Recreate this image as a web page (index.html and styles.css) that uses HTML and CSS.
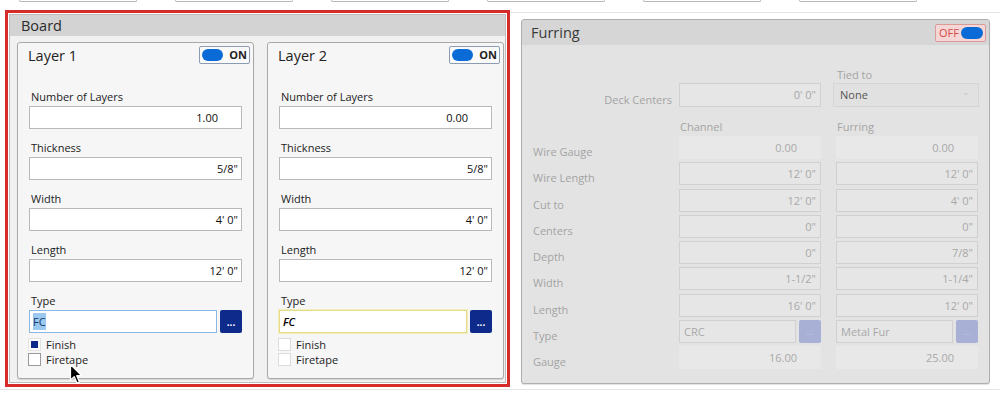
FILE: index.html
```html
<!DOCTYPE html>
<html>
<head>
<meta charset="utf-8">
<title>Board / Furring</title>
<link rel="stylesheet" href="styles.css">
</head>
<body>
    <div class="strip">
        <span></span><span></span><span></span><span></span><span></span><span></span>
    </div>
    <div class="main">
        <div class="board-frame">
            <div class="board">
                <div class="board-head">Board</div>
                <div class="layers">
                    <!-- layer 1 -->
                    <div class="layer">
                        <div class="layer-head">
                            <span class="layer-title">Layer 1</span>
                            <span class="toggle on"><i></i>ON</span>
                        </div>
                        <div class="layer-body">
                            <div class="field"><label>Number of Layers</label><div class="input num">1.00</div></div>
                            <div class="field"><label>Thickness</label><div class="input">5/8"</div></div>
                            <div class="field"><label>Width</label><div class="input">4' 0"</div></div>
                            <div class="field"><label>Length</label><div class="input">12' 0"</div></div>
                            <div class="field type">
                                <label>Type</label>
                                <div class="type-row">
                                    <div class="input text focus"><span class="hl">FC</span></div>
                                    <span class="dots">...</span>
                                </div>
                            </div>
                            <div class="check checked"><i></i>Finish</div>
                            <div class="check"><i></i>Firetape</div>
                        </div>
                    </div>
                    <!-- layer 2 -->
                    <div class="layer">
                        <div class="layer-head">
                            <span class="layer-title">Layer 2</span>
                            <span class="toggle on"><i></i>ON</span>
                        </div>
                        <div class="layer-body">
                            <div class="field"><label>Number of Layers</label><div class="input num">0.00</div></div>
                            <div class="field"><label>Thickness</label><div class="input">5/8"</div></div>
                            <div class="field"><label>Width</label><div class="input">4' 0"</div></div>
                            <div class="field"><label>Length</label><div class="input">12' 0"</div></div>
                            <div class="field type">
                                <label>Type</label>
                                <div class="type-row">
                                    <div class="input text warn"><em>FC</em></div>
                                    <span class="dots">...</span>
                                </div>
                            </div>
                            <div class="check light"><i></i>Finish</div>
                            <div class="check light"><i></i>Firetape</div>
                        </div>
                    </div>
                </div>
            </div>
            <svg class="cursor" width="14" height="22" viewBox="0 0 14 22">
                <path d="M1.5 1.5 L1.5 17 L5.2 13.6 L8 20 L10.4 19 L7.7 12.7 L12.5 12.7 Z" fill="#000" stroke="#fff" stroke-width="1.2" stroke-linejoin="round"/>
            </svg>
        </div>

        <div class="right">
            <div class="furring">
                <div class="fur-head">
                    <span>Furring</span>
                    <span class="toggle off">OFF<i></i></span>
                </div>
                <div class="fur-grid">
                    <span></span><span></span><span class="f-cap tied">Tied to</span>

                    <span class="f-label deck">Deck Centers</span>
                    <div class="f-input tall">0' 0"</div>
                    <div class="f-select">None<b>&#8964;</b></div>

                    <span></span><span class="f-cap">Channel</span><span class="f-cap">Furring</span>

                    <span class="f-label">Wire Gauge</span>
                    <div class="f-input flat num">0.00</div>
                    <div class="f-input flat num">0.00</div>

                    <span class="f-label">Wire Length</span>
                    <div class="f-input">12' 0"</div>
                    <div class="f-input">12' 0"</div>

                    <span class="f-label">Cut to</span>
                    <div class="f-input">12' 0"</div>
                    <div class="f-input">4' 0"</div>

                    <span class="f-label">Centers</span>
                    <div class="f-input">0"</div>
                    <div class="f-input">0"</div>

                    <span class="f-label">Depth</span>
                    <div class="f-input">0"</div>
                    <div class="f-input">7/8"</div>

                    <span class="f-label">Width</span>
                    <div class="f-input">1-1/2"</div>
                    <div class="f-input">1-1/4"</div>

                    <span class="f-label">Length</span>
                    <div class="f-input">16' 0"</div>
                    <div class="f-input">12' 0"</div>

                    <span class="f-label">Type</span>
                    <div class="f-type"><div class="f-input left">CRC</div><span class="f-dots">...</span></div>
                    <div class="f-type"><div class="f-input left">Metal Fur</div><span class="f-dots">...</span></div>

                    <span class="f-label">Gauge</span>
                    <div class="f-input flat num">16.00</div>
                    <div class="f-input flat num">25.00</div>
                </div>
            </div>
        </div>
    </div>
    <div class="baseline"></div>
</body>
</html>
```

FILE: styles.css
```css
*{ margin: 0; padding: 0; box-sizing: border-box;}
body{ background: #fff; font-family: "Open Sans", "Noto Sans", sans-serif; font-size: 11px; color: #222; width: 1000px; height: 396px; overflow: hidden;}

/* cut-off inputs of the row above */
.strip{ height: 10px; display: flex; gap: 38px; padding-left: 19px;}
.strip span{ width: 118px; height: 2px; border: 1px solid #b8b8b8; border-top: 0; border-radius: 0 0 2px 2px;}

.main{ display: flex; align-items: flex-start; height: 379px;}
.baseline{ height: 1px; background: #e6e6e6;}

/* board */
.board-frame{ position: relative; flex: none; margin-left: 5px; width: 505px; height: 377px; border: 3px solid #d52b2b; padding: 1px;}
.board{ height: 100%; border: 1px solid #bdbdbd; background: #f1f1f1;}
.board-head{ height: 21px; line-height: 21px; padding-left: 11px; background: #d3d3d3; font-size: 14.5px; color: #2a2a2a;}
.layers{ display: flex; gap: 13px; padding: 6px 0 0 7px;}
.layer{ width: 237px; height: 337px; border: 1px solid #a9a9a9; border-radius: 3px; background: #f6f6f6; box-shadow: 0 1px 1px rgba(0,0,0,.12);}
.layer-head{ display: flex; justify-content: space-between; align-items: center; height: 18px; margin: 3px 3px 0 10px;}
.layer-title{ font-size: 14.5px; color: #222;}

.toggle{ display: flex; align-items: center; width: 51px; height: 18px; border: 1px solid #8c9cb3; border-radius: 2px; background: #fafafa; padding: 0 2px; font-size: 11px; font-weight: bold; line-height: 16px;}
.toggle i{ width: 22px; height: 12px; border-radius: 6px; background: #0a6bd6;}
.toggle.on i{ margin-right: 6px;}
.toggle.off{ border-color: #d99a9a; background: #f7d6d6; color: #d54848; font-weight: normal; padding-left: 3px; justify-content: space-between;}

.layer-body{ margin-top: 26px; padding: 0 11px;}
.field{ margin-bottom: 12px;}
.field label{ display: block; line-height: 14px; margin: 0 0 2px 2px; font-size: 11px;}
.input{ height: 23px; border: 1px solid #b9b9b9; background: #fff; text-align: right; padding: 0 3px; line-height: 21px; font-size: 11px; color: #111;}
.input.num{ padding-right: 23px;}
.field.type{ margin-bottom: 4px;}
.type-row{ display: flex; gap: 3px;}
.type-row .input{ flex: 1; text-align: left; padding-left: 3px;}
.input.focus{ border-color: #8ab8e6;}
.hl{ background: #9cc9ef; color: #163a6a; padding: 1px 0;}
.input.warn{ border-color: #e6dc86; box-shadow: 0 0 0 1px #f3eebe;}
.input.warn em{ font-weight: 600; color: #000;}
.dots{ width: 22px; height: 23px; border-radius: 2px; background: #0e2b8c; color: #fff; font-size: 10px; font-weight: bold; text-align: center; line-height: 24px;}

.check{ display: flex; align-items: center; height: 15px; gap: 5px; margin-left: -1px; font-size: 11px;}
.check i{ width: 13px; height: 13px; border: 1px solid #9a9a9a; background: #fff;}
.check.checked i{ border-color: #e4e4e4; background: #0e2b8c; box-shadow: inset 0 0 0 2px #fff;}
.check.light i{ border-color: #dcdcdc;}

.cursor{ position: absolute; left: 61px; top: 350px;}

/* furring (disabled) */
.right{ flex: 1; margin-top: 2px; border-top: 1px solid #e4e4e4; padding: 6px 0 0 11px;}
.furring{ width: 469px; height: 365px; border: 1px solid #aeaeae; border-radius: 3px; background: #e3e3e3; box-shadow: 0 1px 1px rgba(0,0,0,.12); overflow: hidden;}
.fur-head{ display: flex; justify-content: space-between; align-items: center; height: 25px; padding: 0 3px 0 9px; background: #d6d6d6; font-size: 14.5px; color: #3a3a3a;}

.fur-grid{ display: grid; grid-template-columns: 146px 157px 142px; grid-template-rows: 17px 24px 29px repeat(9, 26.25px); padding: 21px 0 0 11px; color: #a4a4a4; font-size: 11px;}
.f-cap{ align-self: end; line-height: 15px; margin-bottom: 2px; padding-left: 1px;}
.f-cap.tied{ align-self: center; margin-bottom: 0;}
.f-label{ padding-top: 8px; line-height: 15px;}
.f-label.deck{ text-align: right; padding: 9px 7px 0 0;}
.f-input{ width: 142px; height: 23px; border: 1px solid #d0d0d0; background: #e6e6e6; text-align: right; padding: 0 4px; line-height: 21px; color: #a8a8a8;}
.f-input.tall{ height: 24px; line-height: 22px;}
.f-input.flat{ border-color: #e8e8e8; background: #e8e8e8;}
.f-input.num{ padding-right: 23px;}
.f-select{ position: relative; width: 146px; height: 24px; margin-left: -3px; border: 1px solid #d5d5d5; background: #e1e1e1; padding-left: 6px; line-height: 22px; color: #555;}
.f-select b{ position: absolute; right: 8px; top: -3px; font-weight: normal; font-size: 9px; color: #c4c4c4;}
.f-type{ display: flex; gap: 3px; width: 142px;}
.f-type .f-input{ flex: 1; width: auto; text-align: left;}
.f-dots{ width: 22px; height: 23px; border-radius: 2px; background: #a9b0d6; color: #c5cae6; font-size: 9px; text-align: center; line-height: 24px;}
```
